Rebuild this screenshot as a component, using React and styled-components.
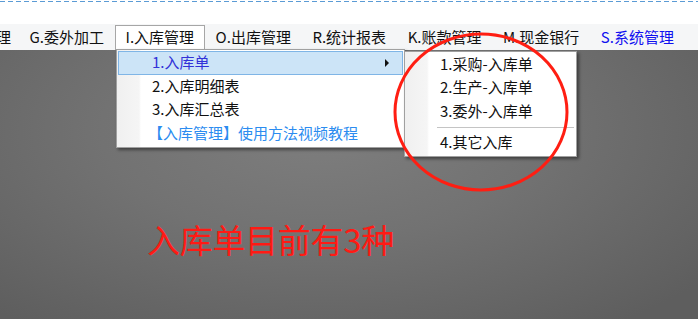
import React from 'react';
import styled, { createGlobalStyle } from 'styled-components';

const GlobalStyle = createGlobalStyle`
  html, body {
    margin: 0;
    padding: 0;
    width: 698px;
    height: 319px;
    overflow: hidden;
  }
  body {
    font-family: "Noto Sans CJK SC", "Noto Sans", "Liberation Sans", sans-serif;
  }
`;

const menus = [
  { label: '理', cut: true },
  { label: 'G.委外加工' },
  { label: 'I.入库管理', active: true },
  { label: 'O.出库管理' },
  { label: 'R.统计报表' },
  { label: 'K.账款管理' },
  { label: 'M.现金银行' },
  { label: 'S.系统管理', accent: true },
];

const storageItems = [
  { label: '1.入库单', selected: true, sub: true },
  { label: '2.入库明细表' },
  { label: '3.入库汇总表' },
  { label: '【入库管理】使用方法视频教程', link: true },
];

const inboundTypes = ['1.采购-入库单', '2.生产-入库单', '3.委外-入库单'];

function App() {
  return (
    <Page>
      <GlobalStyle />
      <TopStrip />
      <MenuBar>
        {menus.map((m) => (
          <MenuItem key={m.label} $active={m.active} $accent={m.accent} $cut={m.cut}>
            {m.label}
          </MenuItem>
        ))}
      </MenuBar>

      <Canvas>
        <Note>入库单目前有3种</Note>
      </Canvas>

      <Dropdown>
        {storageItems.map((it) => (
          <DropItem key={it.label} $selected={it.selected} $link={it.link}>
            {it.label}
            {it.sub && <Arrow />}
          </DropItem>
        ))}
      </Dropdown>

      <SubMenu>
        {inboundTypes.map((t) => (
          <SubItem key={t}>{t}</SubItem>
        ))}
        <Separator />
        <SubItem>4.其它入库</SubItem>
      </SubMenu>

      <Circle width="180" height="164" viewBox="0 0 180 164">
        <ellipse cx="90" cy="82" rx="86" ry="78" fill="none" stroke="#ff1e12" strokeWidth="3" />
      </Circle>
    </Page>
  );
}

export default App;

const Page = styled.div`
  position: relative;
  width: 698px;
  height: 319px;
  display: flex;
  flex-direction: column;
  overflow: hidden;
  background: #ffffff;
`;

const TopStrip = styled.div`
  height: 24px;
  flex-shrink: 0;
  background:
    repeating-linear-gradient(90deg, #5b9bd5 0 5px, transparent 5px 8px) 0 1px / 100% 1px no-repeat,
    #ffffff;
`;

const MenuBar = styled.div`
  height: 26px;
  flex-shrink: 0;
  display: flex;
  align-items: stretch;
  background: #f5f6f7;
  font-size: 15px;
  line-height: 20px;
`;

const MenuItem = styled.div`
  display: flex;
  align-items: center;
  box-sizing: border-box;
  padding: ${(p) => (p.$cut ? '0 0 2px 0' : '0 10px 2px 9.5px')};
  margin-left: ${(p) => (p.$cut ? '-5px' : '0')};
  margin-right: ${(p) => (p.$cut ? '7px' : '0')};
  color: ${(p) => (p.$accent ? '#1010f0' : '#111111')};
  background: ${(p) => (p.$active ? '#ffffff' : 'transparent')};
  border: 1px solid ${(p) => (p.$active ? '#a6a6a6' : 'transparent')};
  border-bottom: none;
  margin-top: 1px;
  white-space: nowrap;
`;

const Canvas = styled.div`
  flex: 1;
  display: flex;
  flex-direction: column;
  padding: 169px 0 0 147px;
  background: radial-gradient(ellipse 70% 90% at 46% 30%, #7e7e7e 0%, #727272 45%, #5e5e5e 100%);
`;

const Note = styled.div`
  font-size: 33px;
  line-height: 40px;
  color: #ff1a14;
  white-space: nowrap;
  letter-spacing: -0.3px;
`;

const MenuPanel = styled.div`
  position: absolute;
  box-sizing: border-box;
  display: flex;
  flex-direction: column;
  background: linear-gradient(90deg, #f0f0f0 0, #f5f5f5 22px, #ffffff 24px);
  border: 1px solid #a0a0a0;
  box-shadow: 2px 2px 3px rgba(0, 0, 0, 0.45);
  font-size: 15px;
  line-height: 20px;
  color: #111111;
`;

const Dropdown = styled(MenuPanel)`
  left: 116px;
  top: 49px;
  width: 289px;
  height: 99px;
  padding: 1px 1px 2px;
`;

const DropItem = styled.div`
  position: relative;
  height: 24px;
  box-sizing: border-box;
  display: flex;
  align-items: center;
  padding-bottom: 1px;
  white-space: nowrap;
  color: ${(p) => (p.$selected ? '#3232d8' : p.$link ? '#2b8cf0' : '#111111')};
  background: ${(p) => (p.$selected ? '#cce4f7' : 'transparent')};
  border: 1px solid ${(p) => (p.$selected ? '#7fb5e6' : 'transparent')};
  padding-left: ${(p) => (p.$link ? '29px' : '33px')};
`;

const Arrow = styled.span`
  position: absolute;
  right: 13px;
  top: 7px;
  width: 0;
  height: 0;
  border-top: 4px solid transparent;
  border-bottom: 4px solid transparent;
  border-left: 4px solid #111111;
`;

const SubMenu = styled(MenuPanel)`
  left: 404px;
  top: 51px;
  width: 173px;
  height: 106px;
  padding: 0 1px 2px;
`;

const SubItem = styled.div`
  height: 24px;
  display: flex;
  align-items: center;
  padding-left: 34px;
  white-space: nowrap;
`;

const Separator = styled.div`
  height: 1px;
  margin: 4px 1px 3px 31px;
  background: #c4c4c4;
`;

const Circle = styled.svg`
  position: absolute;
  left: 391px;
  top: 30px;
  overflow: visible;
`;
